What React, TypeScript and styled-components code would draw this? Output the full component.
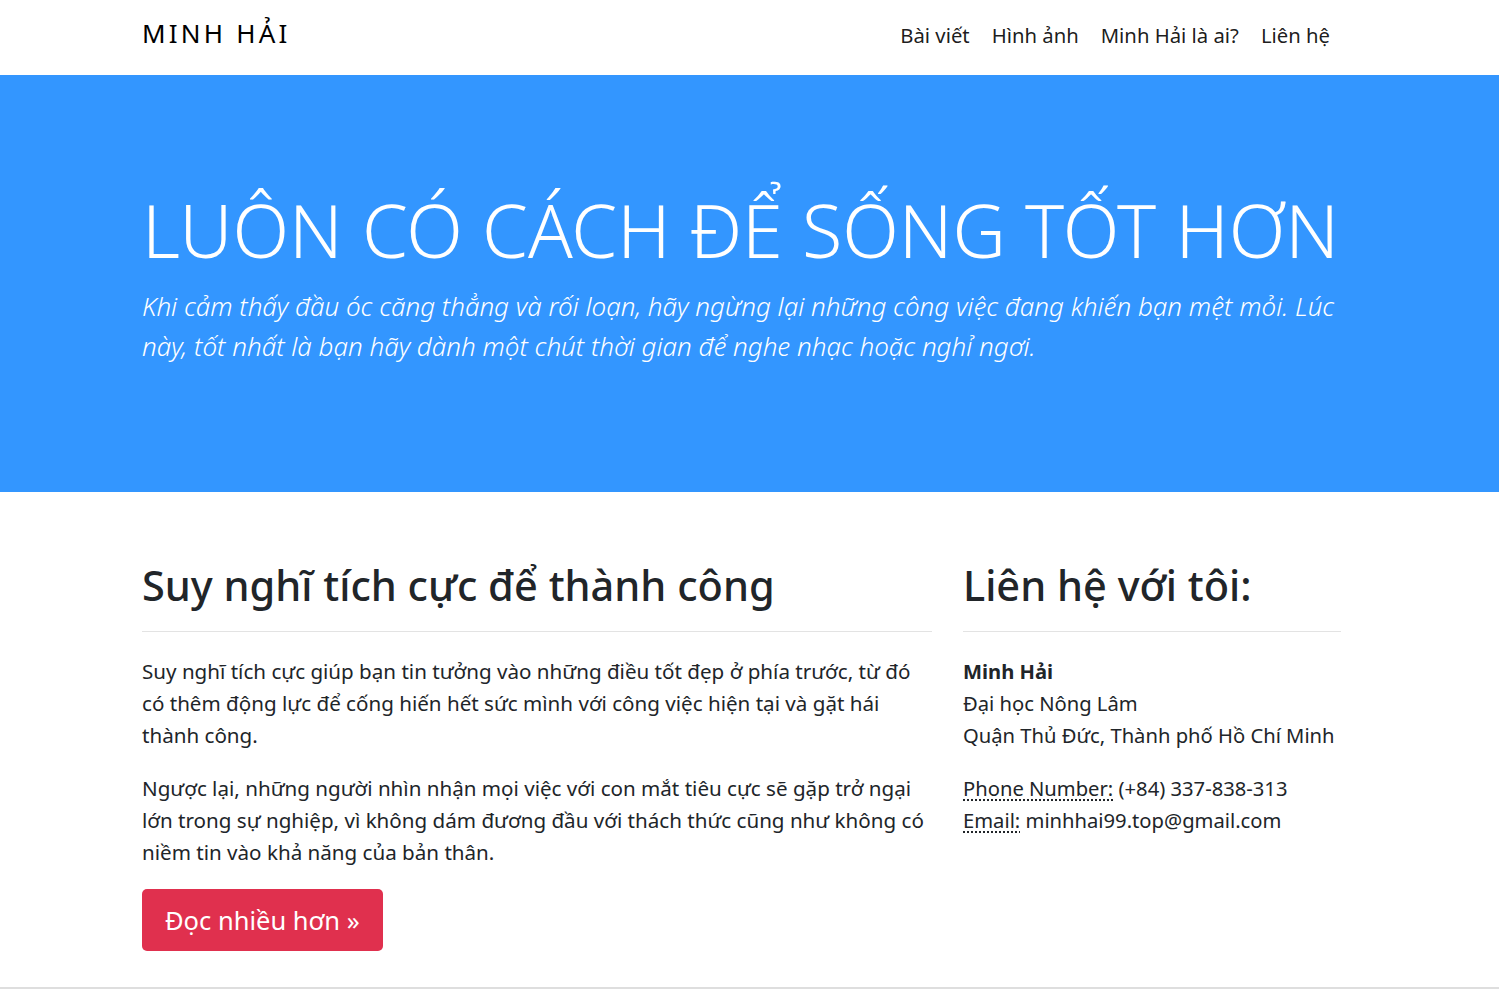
import styled, { createGlobalStyle } from 'styled-components';

const GlobalStyle = createGlobalStyle`
  html, body {
    margin: 0;
    padding: 0;
    background: #fff;
  }
  body {
    font-family: "Noto Sans", "Open Sans", "DejaVu Sans", sans-serif;
    color: #212529;
    -webkit-font-smoothing: antialiased;
  }
  * {
    box-sizing: border-box;
  }
`;

const Container = styled.div`
  width: 1199px;
  margin-left: calc(50% - 607.5px);
`;

const NavBar = styled.nav`
  height: 75px;
  background: #fff;
`;

const NavInner = styled(Container)`
  display: flex;
  align-items: baseline;
  justify-content: space-between;
  padding-top: 13px;
`;

const Brand = styled.a`
  font-size: 26px;
  line-height: 40px;
  letter-spacing: 3.2px;
  color: #000;
  text-decoration: none;
`;

const NavLinks = styled.ul`
  display: flex;
  list-style: none;
  margin: 0;
  padding: 0;
`;

const NavLink = styled.a`
  display: block;
  padding: 0 11px;
  font-size: 20.3px;
  line-height: 30px;
  color: rgba(0, 0, 0, 0.9);
  text-decoration: none;
`;

const Hero = styled.header`
  background: #3396ff;
  color: #fff;
  padding: 110px 0 126px;
`;

const HeroTitle = styled.h1`
  margin: 0;
  font-size: 73.7px;
  line-height: 90px;
  font-weight: 300;
  white-space: nowrap;
`;

const Lead = styled.p`
  margin: 11px 0 0;
  font-size: 26px;
  line-height: 40px;
  font-weight: 300;
  font-style: italic;
`;

const Main = styled.main`
  padding-top: 65px;
`;

const Row = styled(Container)`
  display: grid;
  grid-template-columns: 790px 378px;
  column-gap: 31px;
`;

const Column = styled.section``;

const SectionTitle = styled.h2`
  margin: 0;
  font-size: 41.5px;
  line-height: 56px;
  font-weight: 500;
  color: #212529;
`;

const Divider = styled.hr`
  margin: 18px 0 23px;
  border: 0;
  border-top: 1px solid #e3e3e3;
`;

const Paragraph = styled.p`
  margin: 0 0 21px;
  font-size: 20.6px;
  line-height: 32px;
`;

const Button = styled.a`
  display: inline-block;
  height: 62px;
  padding: 0 23px;
  font-size: 25.5px;
  line-height: 62px;
  color: #fff;
  background: #e0304e;
  border-radius: 5px;
  text-decoration: none;
`;

const Address = styled.address`
  margin: 0 0 21px;
  font-style: normal;
  font-size: 20.2px;
  line-height: 32px;
`;

const Name = styled.strong`
  font-weight: 700;
`;

const Abbr = styled.abbr`
  text-decoration: underline dotted;
  text-underline-offset: 3px;
  cursor: help;
`;

const Footer = styled.footer`
  margin-top: 36px;
  border-top: 2px solid #dedede;
  height: 40px;
`;

export default function App() {
  return (
    <>
      <GlobalStyle />
      <NavBar>
        <NavInner>
          <Brand href="#">MINH HẢI</Brand>
          <NavLinks>
            <li><NavLink href="#">Bài viết</NavLink></li>
            <li><NavLink href="#">Hình ảnh</NavLink></li>
            <li><NavLink href="#">Minh Hải là ai?</NavLink></li>
            <li><NavLink href="#">Liên hệ</NavLink></li>
          </NavLinks>
        </NavInner>
      </NavBar>

      <Hero>
        <Container>
          <HeroTitle>LUÔN CÓ CÁCH ĐỂ SỐNG TỐT HƠN</HeroTitle>
          <Lead>
            Khi cảm thấy đầu óc căng thẳng và rối loạn, hãy ngừng lại những công việc đang khiến bạn mệt mỏi. Lúc
            này, tốt nhất là bạn hãy dành một chút thời gian để nghe nhạc hoặc nghỉ ngơi.
          </Lead>
        </Container>
      </Hero>

      <Main>
        <Row>
          <Column>
            <SectionTitle>Suy nghĩ tích cực để thành công</SectionTitle>
            <Divider />
            <Paragraph>
              Suy nghĩ tích cực giúp bạn tin tưởng vào những điều tốt đẹp ở phía trước, từ đó có thêm động lực để
              cống hiến hết sức mình với công việc hiện tại và gặt hái thành công.
            </Paragraph>
            <Paragraph>
              Ngược lại, những người nhìn nhận mọi việc với con mắt tiêu cực sẽ gặp trở ngại lớn trong sự nghiệp, vì
              không dám đương đầu với thách thức cũng như không có niềm tin vào khả năng của bản thân.
            </Paragraph>
            <Button href="#" role="button">Đọc nhiều hơn »</Button>
          </Column>
          <Column>
            <SectionTitle>Liên hệ với tôi:</SectionTitle>
            <Divider />
            <Address>
              <Name>Minh Hải</Name>
              <br />
              Đại học Nông Lâm
              <br />
              Quận Thủ Đức, Thành phố Hồ Chí Minh
            </Address>
            <Address>
              <Abbr title="Phone Number">Phone Number:</Abbr> (+84) 337-838-313
              <br />
              <Abbr title="Email">Email:</Abbr> minhhai99.top@gmail.com
            </Address>
          </Column>
        </Row>
        <Footer />
      </Main>
    </>
  );
}
